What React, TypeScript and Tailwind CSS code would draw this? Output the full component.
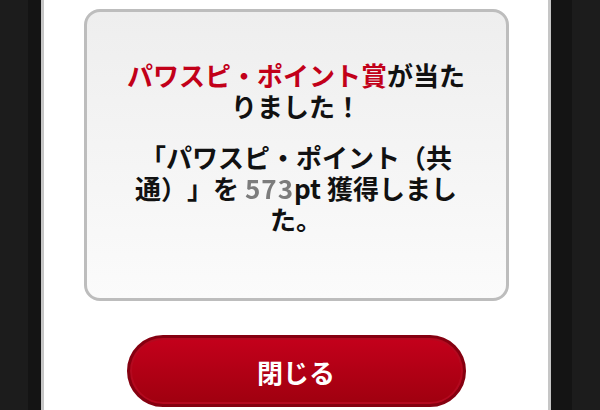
import React from "react";

const jp = { fontFamily: '"Noto Sans CJK JP", "Noto Sans", sans-serif' };

function Sides({ side }: { side: "left" | "right" }) {
    if (side === "left") {
        return (
            <div className="flex h-full shrink-0">
                <div className="w-[28px] bg-[#1c1c1c]" />
                <div className="w-[13px] bg-[#141414]" />
            </div>
        );
    }
    return (
        <div className="flex h-full shrink-0">
            <div className="w-[21px] bg-[#141414]" />
            <div className="w-[28px] bg-[#1c1c1c]" />
        </div>
    );
}

export default function App() {
    return (
        <div className="w-[600px] h-[410px] flex overflow-hidden bg-[#1c1c1c]" style={jp}>
            <Sides side="left" />
            <main className="flex-1 h-full bg-white border-x-[3px] border-[#c6c6c6] flex flex-col items-center pt-[9px]">
                {/* result card */}
                <div className="w-[425px] h-[292px] rounded-[16px] border-[3px] border-[#bdbdbd] bg-gradient-to-b from-[#eeeeee] to-[#fbfbfb] flex flex-col items-center pt-[47px]">
                    <div className="w-[348px] text-center text-[26px] leading-[31px] font-bold text-[#111] [text-spacing-trim:space-all]">
                        <p>
                            <span className="text-[#c20019]">パワスピ・ポイント賞</span>が当たりました！
                        </p>
                        <p className="mt-[20px]">
                            「パワスピ・ポイント（共通）」を <span className="text-[#7c7c7c] tracking-[1px] blur-[0.4px]">573</span>pt 獲得しました。
                        </p>
                    </div>
                </div>

                <button
                    type="button"
                    className="mt-[34px] w-[339px] h-[72px] rounded-full border-[3px] border-[#850010] bg-gradient-to-b from-[#c4001b] to-[#9f000f] shadow-[inset_0_0_0_2px_#b3091f] text-white text-[26px] font-bold flex items-center justify-center"
                >
                    閉じる
                </button>
            </main>
            <Sides side="right" />
        </div>
    );
}
